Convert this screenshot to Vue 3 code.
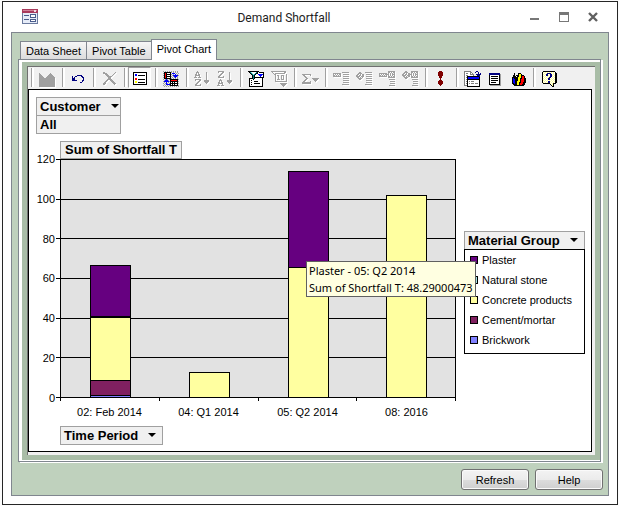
<script setup>
const colors = {
  k: '#000000', g: '#a0a0a0', n: '#000080', b: '#0000ff', r: '#ff0000',
  y: '#ffff00', w: '#ffffff', m: '#800000', t: '#008080', d: '#808080', p: '#ffff99', c: '#a0f0f0'
}

// Turns a bitmap into one path per colour
function paths(rows) {
  const out = {}
  rows.forEach((row, y) => {
    for (let x = 0; x < row.length; x++) {
      const ch = row[x]
      if (!colors[ch]) continue
      let n = 1
      while (row[x + n] === ch) n++
      out[ch] = (out[ch] || '') + `M${x} ${y}h${n}v1h-${n}z`
      x += n - 1
    }
  })
  return Object.entries(out).map(([ch, d]) => ({ d, fill: colors[ch] }))
}

const icon = (label, rows, extra = {}) => ({ label, layers: paths(rows), ...extra })
const off = { disabled: true }
const E = ''

const groups = [
  [icon('Chart Type', [E, E, 'g..........g', 'gg........ggg', 'ggg......ggggg', 'gggg....ggggggg', 'ggggg..ggggggggg',
    'gggggggggggggggg', 'gggggggggggggggg', 'gggggggggggggggg', 'gggggggggggggggg', 'gggggggggggggggg', 'gggggggggggggggg',
    'gggggggggggggggg', 'gggggggggggggggg', 'gggggggggggggggg'], off)],
  [icon('Undo', [E, E, E, E, '.......nnnnn', '..n..nn....nn', '..n.n.......nn', '..nnn........n', '..nnn........n',
    '..nnnnn.....nn', '............n', '..........nn'])],
  [icon('Delete', [E, '..gg..........g', '..gggg.......g', '....ggg.....g', '.....ggg...g', '......ggggg', '.......ggg',
    '.......ggg', '......ggggg', '.....gg..ggg', '....gg....ggg', '...gg......ggg', '..ggg.......ggg', '..gg.........g'], off)],
  [icon('Legend', [E, E, '.kkkkkkkkkkkkkk', '.kwwwwwwwwwwwwk', '.kwbbwwwwwwwwwk', '.kwbbwkkkkkkkwk', '.kwwwwwwwwwwwwk',
    '.kwwwwwwwwwwwwk', '.kwrrwwwwwwwwwk', '.kwrrwkkkkkkkwk', '.kwwwwwwwwwwwwk', '.kwyywwwwwwwwwk', '.kwyywkkkkkkkwk',
    '.kwwwwwwwwwwwwk', '.kkkkkkkkkkkkkk'], { pressed: true })],
  [icon('By Row/Column', ['g.g.g.g.g.g.g.g.', '.kkkkkkkg.g.g.g.', 'gkrkwwwk.bbb.g.g', '.krkkkkkg.g.b.g.', 'gkrkwwwk.gbbbbbg',
    '.krkkkkkg.gbbbg.', 'gkrkwwwk.g.gb.g.', '.kkkkkkkg.g.g.g.', 'g.gbg.gkkkkkkkkg', '.gbbbg.krrrrrrk.', 'gbbbbbgkkkkkkkkg',
    '.g.b.g.kwkwkwwk.', 'g.gbg.gkkkkkkkkg', '.g.bbbbkwkwkwwk.', 'g.g.g.gkkkkkkkkg', '.g.g.g.g.g.g.g.g'])],
  [
    icon('Sort Ascending', ['...g', '..ggg.......g', '..g.g.......g', '.gg.gg......g', '.ggggg......g', '.g...g......g',
      'ggg.ggg.....g', '............g', '.gggggg.....g', '.g...gg...ggggg', '....gg....ggggg', '...gg......ggg', '..gg........g', '.gg...g', '.gggggg'], off),
    icon('Sort Descending', ['.gggggg', '.g...gg.....g', '....gg......g', '...gg.......g', '..gg........g', '.gg...g.....g', '.gggggg.....g',
      '............g', '...g........g', '..ggg.....ggggg', '..g.g.....ggggg', '.gg.gg.....ggg', '.ggggg......g', '.g...g', 'ggg.ggg'], off)
  ],
  [
    icon('AutoFilter', ['kkkkkkkkkkk', '.ktcwwwwtk.kkkkk', '..ktcwwtkkwwwwwk', '...ktctkwwbbbbbk', '....ktkwwwwbbbwk', '....ktkwwwwwbwwk',
      '....ktkkkkkkkkkk', '.kkkktkwwwwwwwk', '.kwwwkwwwwwwwwk', '.kwkwwwwwwwwwwk', '.kwwwwkkkkwwwwk', '.kwkwwwwwwwwwwk',
      '.kwwwwkkkkkkwwk', '.kwkwwwwwwwwwwk', '.kwwwwwwwwwwwwk', '.kkkkkkkkkkkkkk']),
    icon('Show Top/Bottom', ['ggggggggggggggg', '.g...........gg', '..g.gggggggggg', '...gg..........g', '....g.gg..ggg..g', '....g..g..g.g..g',
      '....g..g..g.g..g', '....g..g..g.g..g', '....g.ggg.ggg..g', '....g..........g', '....gggggggggggg', E, '.........ggggggg', '..........ggggg',
      '...........ggg', '............g'], off)
  ],
  [icon('AutoCalc', [E, E, E, 'ggggggggg', '.gg.....g', '..gg', '...gg', '....gg....ggggggg', '...gg......ggggg', '..gg........ggg',
    '.gg.....g....g', 'ggggggggg', 'ggggggggg'], off)],
  [
    icon('Collapse', [E, '.........ggggggg', 'gggggggg', 'g.g.g.gg..gggggg', 'gg.g.g.g', 'gggggggg..gggggg', E, '..........gggggg', E,
      '..........gggggg', E, '..........gggggg', E, '.........ggggggg'], off),
    icon('Expand', [E, '...gg....ggggggg', '..gggg', '.gg.g.gg..gggggg', 'gg.gg.gg', 'gggg.ggg..gggggg', '.gg.g.g', '..gggg....gggggg', '...gg',
      '..........gggggg', E, '..........gggggg', E, '.........ggggggg'], off),
    icon('Drill Into', ['.........ggggggg', '.........gg.g.gg', 'gggggggg.g.g.g.g', 'g.g.g.gggg.g.ggg', 'gg.g.g.g.g.g.g.g', 'gggggggg.gg.g.gg',
      '.........ggggggg', E, '..........gggggg', E, '...........ggggg', E, '...........ggggg', E, '..........gggggg'], off),
    icon('Drill Out', ['...gg....ggggggg', '..gggg...gg.g.gg', '.gg.g.gg.g.g.g.g', 'gg.gg.gggg.g.ggg', 'gggg.ggg.g.g.g.g', '.gg.g.gg.gg.g.gg',
      '..gggg...ggggggg', '...gg', '..........gggggg', E, '...........ggggg', E, '...........ggggg', E, '..........gggggg'], off)
  ],
  [icon('Refresh Data', ['......mmm', '.....mmmmm', '.....mmmmm', '.....mmmmm', '.....mmmmm', '......mmm', '......mmm', '.......m', '.......m',
    '......mmm', '.....mmmmm', '.....mmmmm', '.....mmmmm', '......mmm', '.......m'])],
  [
    icon('Export', ['ddddddd.....nn', 'dwwwwwdd...n..n', 'dwddwwdwd.....n.n', 'dwwwwwdddd..nnnnn', 'dwddwwwwwd...nnn', 'dwwkkkkkkkkkkkkn', 'dwdkbbbbbbbbbbbk',
      'dwwkbbbbbbbbbbbk', 'dwdkkkkkkkkkkkkk', 'dwwkwwwwwwwwwwwk', 'dwdkwdwdddwwwwwk', 'dwwkwwwwwwwwwwwk', 'dwdkwdwdddwdddwk', 'dwwkwwwwwwwwwwwk',
      'dddkwwwwwwwwwwwk', '...kkkkkkkkkkkkk']),
    icon('Field List', [E, E, '..nnnnnnnnnnn', '..nnnnnnnnnnng', '..kwwwwwwwwwkg', '..kwkkkkkkkwkg', '..kwwwwwwwwwkg', '..kwkkkkkkkwkg', '..kwwwwwwwwwkg',
      '..kwkkkkkkkwkg', '..kwwwwwwwwwkg', '..kwkkkkkwwwkg', '..kwwwwwwwwwkg', '..kkkkkkkkkkkg', '...ggggggggggg']),
    icon('Properties', [E, E, '....k...kkk', '....k...kyyk', '...kk.kkkyykkk', '...kkkwkkyykrrk', '..kkkkkkyyykrrk', '..kbkkkkyykkrrkk', '..kbbkkkyykrrrkk',
      '..kbbkkkyykrrrkk', '..kbbkkyyykrrrkk', '..kbbkkyykkrrkkk', '..kkbkkyykrrrkk', '...kkkkyykrrkkk', '....kkkkkkkkkk'])
  ],
  [icon('Help', ['..kkkkkkkkkkkk', '.kpwpwpwpwpwpwk', '.kwpwpnnnnpwpwkk', '.kpwpnnwpnnwpwkk', '.kwpwnnpwnnpwpkk', '.kpwpwpwpnnwpwkk',
    '.kwpwpwpnnwpwpkk', '.kpwpwpnnwpwpwkk', '.kwpwpwnnpwpwpkk', '.kpwpwpwpwpwpwkk', '.kwpwpwnnpwpwpkk', '.kpwpwpnnwpwpwkk',
    '..kkkkkkkpwpkkk', '.........kwpk', '..........kpk', '...........kk'])]
]

const materials = [
  { name: 'Plaster', color: '#660080' },
  { name: 'Natural stone', color: '#a0e0e0' },
  { name: 'Concrete products', color: '#ffffa0' },
  { name: 'Cement/mortar', color: '#802060' },
  { name: 'Brickwork', color: '#8080ff' }
]
const colorOf = Object.fromEntries(materials.map(m => [m.name, m.color]))

// Running totals at the top of each stacked segment
const periods = [
  { name: '02: Feb 2014', stack: [['Brickwork', 1], ['Cement/mortar', 8.6], ['Concrete products', 40.3], ['Natural stone', 40.8], ['Plaster', 66.5]] },
  { name: '04: Q1 2014', stack: [['Concrete products', 12.6]] },
  { name: '05: Q2 2014', stack: [['Concrete products', 65.6], ['Plaster', 113.9]] },
  { name: '08: 2016', stack: [['Concrete products', 101.9]] }
]
const ticks = [120, 100, 80, 60, 40, 20, 0]
const yOf = v => Math.round(238 - (v * 238) / 120)
const xOf = i => Math.round(4 + (i * 395) / 4)
const bars = periods.flatMap((p, i) =>
  p.stack.map(([name, top], j) => {
    const base = j ? p.stack[j - 1][1] : 0
    return { x: xOf(i) + 30, y: yOf(top), h: yOf(base) - yOf(top), fill: colorOf[name] }
  })
)
</script>

<template>
  <main class="window">
    <header class="titlebar">
      <svg class="app-icon" viewBox="0 0 16 16" shape-rendering="crispEdges" aria-hidden="true">
        <rect width="16" height="15" fill="#6b7a9e" />
        <rect width="16" height="4" fill="#a83a5c" />
        <rect x="1" y="1" width="14" height="1" fill="#cf7f97" />
        <rect x="12" y="1" width="2" height="2" fill="#f4dbe2" />
        <rect x="1" y="4" width="14" height="10" fill="#e6ecf8" />
        <path d="M2 6h5v1h-5zM2 10h5v1h-5zM8 5h6v4h-6zM8 10h6v3h-6z" fill="#4a5c8c" />
        <path d="M9 6h4v2h-4zM9 11h4v1h-4z" fill="#fff" />
      </svg>
      <h1>Demand Shortfall</h1>
      <div class="controls">
        <button aria-label="Minimize"><svg viewBox="0 0 10 10" shape-rendering="crispEdges"><path d="M0 6h9v2h-9z" fill="#777" /></svg></button>
        <button aria-label="Maximize"><svg viewBox="0 0 10 10" shape-rendering="crispEdges"><path d="M0 0h10v10h-10zM1 3v6h8v-6z" fill="#777" fill-rule="evenodd" /></svg></button>
        <button aria-label="Close"><svg viewBox="0 0 10 10"><path d="M1 1L9 9M9 1L1 9" stroke="#606060" stroke-width="2.4" /></svg></button>
      </div>
    </header>

    <section class="form">
      <nav class="tabs" role="tablist">
        <button class="tab" role="tab">Data Sheet</button>
        <button class="tab" role="tab">Pivot Table</button>
        <button class="tab active" role="tab" aria-selected="true">Pivot Chart</button>
      </nav>

      <div class="page">
        <div class="frame">
          <div class="toolbar" role="toolbar">
            <template v-for="(group, g) in groups" :key="g">
              <span class="sep"></span>
              <button v-for="item in group" :key="item.label" class="tool" :class="{ pressed: item.pressed }" :disabled="item.disabled" :aria-label="item.label">
                <svg viewBox="0 0 17 17" shape-rendering="crispEdges">
                  <g v-if="item.disabled" transform="translate(1 1)">
                    <path v-for="(l, i) in item.layers" :key="i" :d="l.d" fill="#fff" />
                  </g>
                  <path v-for="(l, i) in item.layers" :key="i" :d="l.d" :fill="l.fill" />
                </svg>
              </button>
            </template>
          </div>

          <div class="chart">
            <div class="filter">
              <button class="field">Customer<i class="caret"></i></button>
              <button class="field value">All</button>
            </div>

            <div class="board">
              <ul class="y-axis">
                <li v-for="t in ticks" :key="t">{{ t }}</li>
              </ul>
              <div class="plot">
                <button class="field measure">Sum of Shortfall T</button>
                <svg class="bars" viewBox="0 0 400 242" preserveAspectRatio="none" shape-rendering="crispEdges" role="img" aria-label="Sum of Shortfall T by Time Period">
                  <rect x="4" y="0" width="396" height="239" fill="#e2e2e2" />
                  <rect v-for="t in ticks" :key="t" x="0" :y="yOf(t)" width="400" height="1" />
                  <rect v-for="i in 5" :key="i" :x="xOf(i - 1)" y="238" width="1" height="4" />
                  <rect x="4" y="0" width="1" height="239" />
                  <rect x="399" y="0" width="1" height="239" />
                  <g v-for="(b, i) in bars" :key="i">
                    <rect :x="b.x" :y="b.y" width="41" :height="b.h + 1" />
                    <rect :x="b.x + 1" :y="b.y + 1" width="39" :height="Math.max(b.h - 1, 0)" :fill="b.fill" />
                  </g>
                </svg>
                <ul class="x-axis">
                  <li v-for="p in periods" :key="p.name">{{ p.name }}</li>
                </ul>
                <button class="field period">Time Period<i class="caret"></i></button>
              </div>
              <aside class="legend">
                <button class="field">Material Group<i class="caret"></i></button>
                <ul>
                  <li v-for="m in materials" :key="m.name"><i class="swatch" :style="{ background: m.color }"></i>{{ m.name }}</li>
                </ul>
              </aside>
            </div>

            <div class="tooltip" role="tooltip">
              <p>Plaster - 05: Q2 2014</p>
              <p>Sum of Shortfall T: 48.29000473</p>
            </div>
          </div>
        </div>
      </div>

      <footer class="actions">
        <button>Refresh</button>
        <button>Help</button>
      </footer>
    </section>
  </main>
</template>

<style>
body { background: #fcfcfc; padding: 1px 1px 1px 2px; }
</style>

<style scoped>
* { box-sizing: border-box; margin: 0; padding: 0; }
ul { list-style: none; }
button { font: inherit; color: inherit; border: 0; background: none; }
svg { display: block; }

.window {
  display: flex;
  flex-direction: column;
  min-height: calc(100vh - 2px);
  padding: 0 8px 8px;
  border: 1px solid #262626;
  background: #fff;
  color: #000;
  font: 11px/12px "Liberation Sans", Arial, sans-serif;
}
.titlebar {
  display: flex;
  align-items: center;
  height: 30px;
  padding: 0 10px 0 11px;
}
.app-icon { width: 16px; height: 16px; }
.titlebar h1 {
  flex: 1;
  padding-top: 1px;
  text-align: center;
  font: 12px/16px Roboto, sans-serif;
  color: #222;
}
.controls { display: flex; gap: 19px; padding-right: 1px; padding-bottom: 1px; }
.controls svg { width: 10px; height: 10px; }

.form {
  flex: 1;
  display: flex;
  flex-direction: column;
  padding: 6px 5px 5px 6px;
  border: 1px solid #80868f;
  background: #bfd1bd;
}
.tabs { display: flex; align-items: flex-end; height: 20px; padding-left: 2px; }
.tab {
  height: 18px;
  padding: 0 5px;
  border: 1px solid #80868f;
  border-bottom: 0;
  background: linear-gradient(#f6f6f6, #dcdcdc);
}
.tab + .tab { margin-left: -1px; }
.tab.active {
  position: relative;
  height: 21px;
  margin-bottom: -1px;
  padding-bottom: 2px;
  background: #fff;
}
.page {
  flex: 1;
  display: flex;
  margin-right: 2px;
  padding: 6px 5px 6px 8px;
  border: 1px solid #80868f;
  background: #a9bda7;
  box-shadow: inset 3px 2px #fff, inset 0 -1px #fff, 2px 1px #fff;
}
.frame {
  flex: 1;
  display: flex;
  flex-direction: column;
  padding: 0 3px 3px 0;
  border: solid #707070;
  border-width: 1px 0 0 1px;
  background: #f0f0f0;
}
.toolbar { display: flex; height: 22px; }
.sep { width: 8px; padding: 1px 2px 1px 4px; }
.sep:first-child { width: 7px; padding-left: 3px; }
.sep::before { content: ""; display: block; height: 19px; width: 2px; border-left: 1px solid #a0a0a0; background: #fff; }
.tool { width: 23px; height: 21px; padding: 3px 0 0 4px; }
.tool svg { width: 17px; height: 17px; }
.tool.pressed {
  padding: 2px 0 0 3px;
  border: 1px solid #a0a0a0;
  border-right-color: #fff;
  border-bottom-color: #fff;
  background: #f9f9f9;
}

.chart {
  position: relative;
  flex: 1;
  padding: 7px 6px 6px 7px;
  border: 1px solid #000;
  background: #fff;
}
.field {
  display: flex;
  align-items: center;
  justify-content: space-between;
  gap: 10px;
  height: 19px;
  padding: 0 6px 0 3px;
  border: 1px solid #a0a0a0;
  background: #f0f0f0;
  font-size: 13px;
  font-weight: bold;
}
.caret { margin-bottom: 2px; border: solid transparent; border-width: 4px 4px 0; border-top-color: #000; }
.filter { width: 85px; }
.filter .field { width: 100%; }
.value { margin-top: -1px; }
.board { display: flex; margin-top: 7px; }
.y-axis {
  display: flex;
  flex-direction: column;
  justify-content: space-between;
  width: 20px;
  height: 251px;
  margin-top: 12px;
  padding-right: 1px;
}
.y-axis li { display: flex; justify-content: flex-end; }
.plot { flex: 1; }
.measure, .period { margin-left: 4px; }
.measure { height: 18px; padding: 0 4px; }
.bars { width: 100%; height: 242px; }
.x-axis { display: flex; margin-top: 5px; padding-left: 4px; text-align: center; }
.x-axis li { flex: 1; }
.period { margin-top: 8px; }
.legend { width: 121px; margin-left: 8px; padding-top: 90px; }
.legend .field { width: 100%; }
.legend ul {
  display: grid;
  gap: 8px;
  margin-top: -1px;
  padding: 4px 5px 7px;
  border: 1px solid #000;
}
.legend li { display: flex; align-items: center; gap: 4px; }
.swatch { width: 8px; height: 8px; border: 1px solid #000; }

.tooltip {
  position: absolute;
  left: 277px;
  top: 171px;
  padding: 0 2px;
  border: 1px solid #606060;
  background: #ffffe1;
  font: 11px/17px "Noto Sans", sans-serif;
  white-space: nowrap;
}

.actions { display: flex; justify-content: flex-end; gap: 6px; margin-top: 7px; }
.actions button {
  width: 68px;
  height: 21px;
  border: 1px solid #707070;
  border-radius: 3px;
  background: linear-gradient(#f3f3f3 0%, #ebebeb 50%, #dddddd 50%, #cfcfcf 100%);
  box-shadow: inset 0 0 0 1px #fafafa;
}
</style>
